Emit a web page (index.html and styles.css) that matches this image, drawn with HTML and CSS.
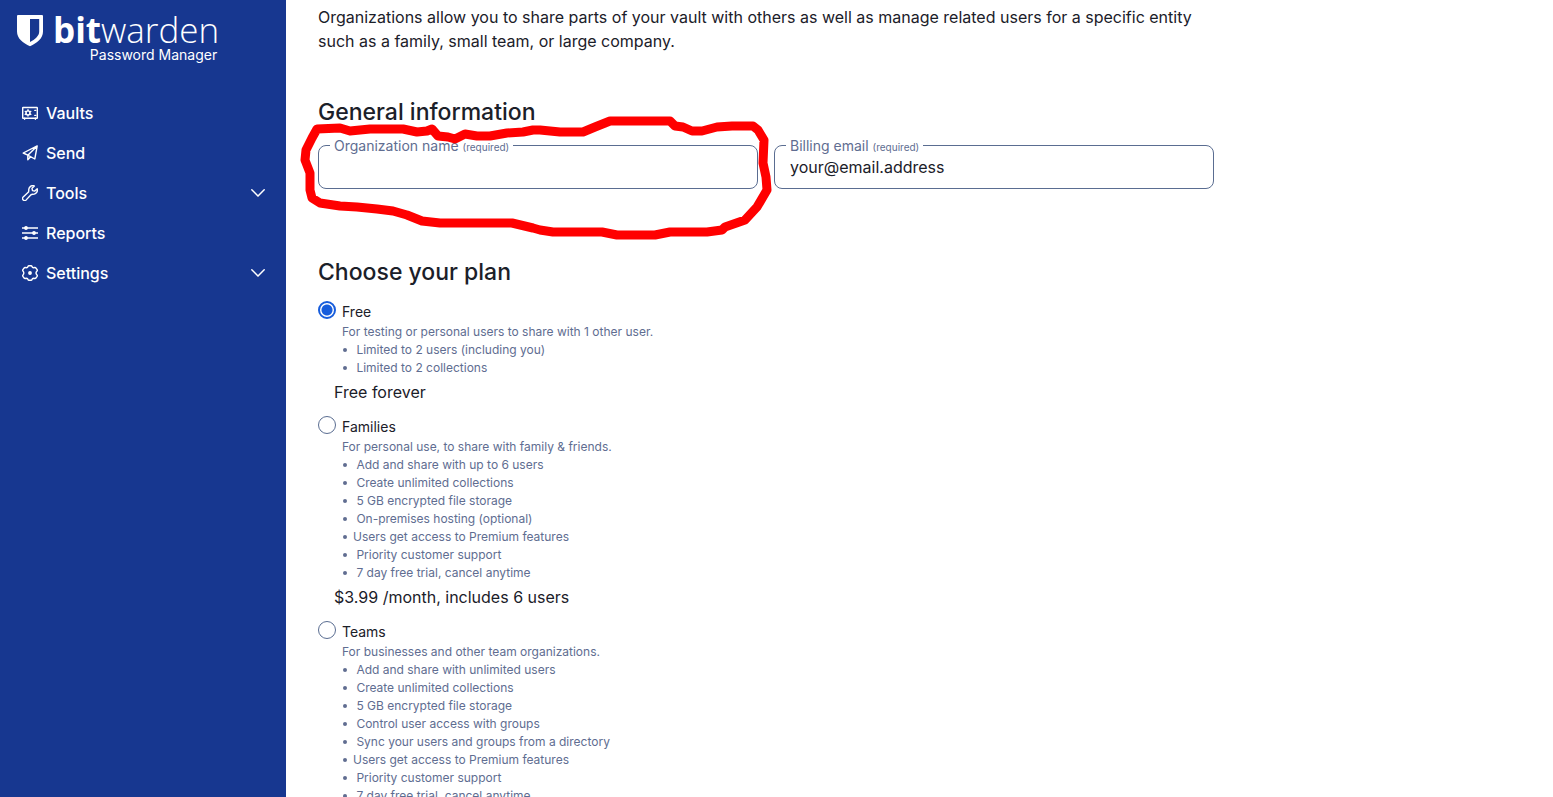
FILE: index.html
```html
<!DOCTYPE html>
<html lang="en">
<head>
    <meta charset="UTF-8">
    <meta name="viewport" content="width=device-width, initial-scale=1.0">
    <title>New organization | Bitwarden Web vault</title>
    <link rel="stylesheet" href="styles.css">
</head>
<body>
    <div class="layout">
        <aside class="sidebar">
            <a href="#" class="logo">
                <svg class="logo-shield" viewBox="0 0 26 32" aria-hidden="true">
                    <path fill="#fff" fill-rule="evenodd" d="M1 0h24a1 1 0 0 1 1 1v15.500c0 7-6 11.500-13 14.800C6 28 0 23.500 0 16.500V1a1 1 0 0 1 1-1zM13 4v23c5-2.600 9.200-6 9.200-10.500V4z"/>
                </svg>
                <span class="logo-text">
                    <span class="logo-name"><b>bit</b>warden</span>
                    <span class="logo-product">Password Manager</span>
                </span>
            </a>
            <nav class="nav">
                <a href="#" class="nav-item">
                    <svg class="nav-icon" viewBox="0 0 16 16">
                        <rect x="0.700" y="2.500" width="14.600" height="10.800" rx="0.400"/>
                        <circle cx="6" cy="7.900" r="2"/>
                        <path d="M6 4.800v1M6 10v1M3.200 6.400l.9.500M7.900 8.900l.9.500M3.200 9.400l.9-.5M7.900 6.900l.9-.5M12.800 5.400h1M12.800 10.400h1M2.600 13.300v1M13.400 13.300v1"/>
                    </svg>
                    <span>Vaults</span>
                </a>
                <a href="#" class="nav-item">
                    <svg class="nav-icon" viewBox="0 0 16 16">
                        <path d="M15.200.9L1.200 8l4.600 2.200 7 3.800zM15.200.9L5.800 10.200v4.600l2.800-3"/>
                    </svg>
                    <span>Send</span>
                </a>
                <button type="button" class="nav-item">
                    <svg class="nav-icon" viewBox="0 0 16 16">
                        <path d="M12.300.9C9.300-.1 6.300 2.200 6.800 5.600L6.500 7 1.200 11.900c-2 2.200 1 4.900 3 3L9 9.700l1.500-.4c3.200.4 5.600-2.600 4.700-5.500l-2.400 2.300-2.300-.5-.5-2.300z"/>
                    </svg>
                    <span>Tools</span>
                    <svg class="chevron" viewBox="0 0 14 8"><path d="M0.800 0.800L7 7l6.200-6.200"/></svg>
                </button>
                <a href="#" class="nav-item">
                    <svg class="nav-icon reports" viewBox="0 0 16 16">
                        <path d="M0 3h16M0 8h16M0 13h16"/>
                        <circle cx="4" cy="3" r="1.200"/>
                        <circle cx="12" cy="8" r="1.200"/>
                        <circle cx="4" cy="13" r="1.200"/>
                    </svg>
                    <span>Reports</span>
                </a>
                <button type="button" class="nav-item">
                    <svg class="nav-icon" viewBox="0 0 16 16">
                        <path d="M6 1.500Q6.200.7 7 .7h2q.8 0 1 .8.300 1.200 1.500 1.200l1.300-.2q.7-.1 1.100.5l1.200 1.600q.5.800-.1 1.400c-1.100 1.100-1.100 2.900 0 4q.6.600.1 1.400l-1.200 1.600q-.4.600-1.100.5l-1.300-.2q-1.200 0-1.500 1.200-.2.800-1 .8H7q-.8 0-1-.8-.3-1.200-1.500-1.200l-1.300.2q-.7.100-1.100-.5L.9 11.400q-.5-.8.100-1.400c1.100-1.100 1.100-2.900 0-4q-.6-.6-.1-1.400l1.200-1.600q.4-.6 1.100-.5l1.300.2q1.200 0 1.500-1.200z"/>
                        <circle class="hub" cx="8" cy="8" r="1.200"/>
                    </svg>
                    <span>Settings</span>
                    <svg class="chevron" viewBox="0 0 14 8"><path d="M0.800 0.800L7 7l6.200-6.200"/></svg>
                </button>
            </nav>
        </aside>

        <main class="content">
            <form class="org-form">
                <p class="intro">Organizations allow you to share parts of your vault with others as well as manage related users for a specific entity such as a family, small team, or large company.</p>

                <h2>General information</h2>
                <div class="fields">
                    <div class="field">
                        <label for="orgName">Organization name <small>(required)</small></label>
                        <input type="text" id="orgName" name="orgName">
                        <svg class="marker" viewBox="300 115 472 125" aria-hidden="true">
                            <path d="M317 129L340 128 350 131 370 129 403 129 417 132 427 131 432 129 438 136 448 137 455 139 465 134 477 136 490 136 507 133 523 132 533 130 540 130 560 132 583 132 595 127 610 121 670 121 675 126 683 127 692 131 702 131 717 127 732 126 753 126 758 130 764 140 763 163 766 177 767 190 757 207 745 220 725 227 722 230 707 232 670 232 655 235 617 235 602 232 553 232 540 230 533 228 512 223 440 223 422 221 407 215 393 211 377 209 357 207 340 206 320 203 312 198 310 190 310 173 305 160 306 150 312 138z"/>
                        </svg>
                    </div>
                    <div class="field">
                        <label for="billingEmail">Billing email <small>(required)</small></label>
                        <input type="email" id="billingEmail" name="billingEmail" value="your@email.address">
                    </div>
                </div>

                <h2>Choose your plan</h2>
                <div class="plan">
                    <div class="plan-option">
                        <input type="radio" id="planFree" name="plan" checked>
                        <div class="plan-body">
                            <label for="planFree">Free</label>
                            <p>For testing or personal users to share with 1 other user.</p>
                            <ul>
                                <li>&nbsp;Limited to 2 users (including you)</li>
                                <li>&nbsp;Limited to 2 collections</li>
                            </ul>
                        </div>
                    </div>
                    <div class="price">Free forever</div>
                </div>

                <div class="plan">
                    <div class="plan-option">
                        <input type="radio" id="planFamilies" name="plan">
                        <div class="plan-body">
                            <label for="planFamilies">Families</label>
                            <p>For personal use, to share with family &amp; friends.</p>
                            <ul>
                                <li>&nbsp;Add and share with up to 6 users</li>
                                <li>&nbsp;Create unlimited collections</li>
                                <li>&nbsp;5 GB encrypted file storage</li>
                                <li>&nbsp;On-premises hosting (optional)</li>
                                <li>Users get access to Premium features</li>
                                <li>&nbsp;Priority customer support</li>
                                <li>&nbsp;7 day free trial, cancel anytime</li>
                            </ul>
                        </div>
                    </div>
                    <div class="price">$3.99 /month, includes 6 users</div>
                </div>

                <div class="plan">
                    <div class="plan-option">
                        <input type="radio" id="planTeams" name="plan">
                        <div class="plan-body">
                            <label for="planTeams">Teams</label>
                            <p>For businesses and other team organizations.</p>
                            <ul>
                                <li>&nbsp;Add and share with unlimited users</li>
                                <li>&nbsp;Create unlimited collections</li>
                                <li>&nbsp;5 GB encrypted file storage</li>
                                <li>&nbsp;Control user access with groups</li>
                                <li>&nbsp;Sync your users and groups from a directory</li>
                                <li>Users get access to Premium features</li>
                                <li>&nbsp;Priority customer support</li>
                                <li>&nbsp;7 day free trial, cancel anytime</li>
                            </ul>
                        </div>
                    </div>
                </div>
            </form>
        </main>
    </div>
</body>
</html>
```
FILE: styles.css
```css
* {
    box-sizing: border-box;
}
body {
    margin: 0;
    font-family: Inter, "Liberation Sans", sans-serif;
    font-size: 16px;
    line-height: 24px;
    color: #1b2029;
    background: #fff;
}
.layout {
    display: flex;
    height: 100vh;
    overflow: hidden;
}

/* Sidebar */
.sidebar {
    flex: 0 0 286px;
    background: #173790;
    color: #fff;
}
.logo {
    display: flex;
    align-items: flex-start;
    gap: 9px;
    padding: 15px 16px 0;
    color: #fff;
    text-decoration: none;
}
.logo-shield {
    width: 28px;
    height: 32px;
}
.logo-text {
    display: flex;
    flex-direction: column;
    align-items: flex-end;
}
.logo-name {
    font-family: "Open Sans", sans-serif;
    font-size: 35px;
    font-weight: 300;
    line-height: 30px;
}
.logo-name b {
    font-weight: 700;
}
.logo-product {
    padding-right: 2px;
    font-size: 14px;
    line-height: 20px;
}
.nav {
    display: flex;
    flex-direction: column;
    padding-top: 28px;
}
.nav-item {
    display: flex;
    align-items: center;
    gap: 8px;
    height: 40px;
    padding: 0 21px 0 22px;
    border: none;
    background: none;
    color: #fff;
    font-family: inherit;
    font-size: 16px;
    font-weight: 500;
    text-decoration: none;
    cursor: pointer;
}
.nav-item:hover span {
    text-decoration: underline;
}
.nav-icon {
    width: 16px;
    height: 16px;
    fill: none;
    stroke: #fff;
    stroke-width: 1.4;
    stroke-linejoin: round;
    stroke-linecap: round;
}
.reports circle,
.hub {
    fill: #fff;
}
.chevron {
    width: 14px;
    height: 8px;
    margin-left: auto;
    fill: none;
    stroke: #fff;
    stroke-width: 1.5;
    stroke-linecap: round;
}

/* Main content */
.content {
    flex: 1;
    min-width: 0;
    padding: 5px 32px 0;
    overflow: hidden;
}
.org-form {
    max-width: 896px;
}
.intro {
    margin: 0 0 43px;
}
h2 {
    margin: 0 0 13px;
    font-size: 23px;
    font-weight: 500;
    line-height: 32px;
}
.fields {
    display: grid;
    grid-template-columns: 1fr 1fr;
    gap: 16px;
    padding-top: 4px;
    margin-bottom: 67px;
}
.field {
    position: relative;
}
.field label {
    position: absolute;
    top: -9px;
    left: 12px;
    padding: 0 4px;
    background: #fff;
    color: #606d91;
    font-size: 14px;
    line-height: 20px;
}
.field small {
    font-size: 10px;
}
.field input {
    display: block;
    width: 100%;
    height: 44px;
    padding: 0 15px;
    border: 1px solid #5a6d91;
    border-radius: 8px;
    background: #fff;
    color: #1b2029;
    font-family: inherit;
    font-size: 16px;
}
.field input:focus {
    border-color: #175ddc;
    outline: none;
}
.marker {
    position: absolute;
    top: -30px;
    left: -18px;
    width: 472px;
    height: 125px;
    fill: none;
    stroke: #f00;
    stroke-width: 9;
    stroke-linejoin: round;
    pointer-events: none;
}

/* Plans */
.plan {
    margin-bottom: 12px;
}
.plan-option {
    display: flex;
    align-items: flex-start;
    gap: 6px;
}
.plan-option input {
    appearance: none;
    flex: none;
    width: 18px;
    height: 18px;
    margin: 0;
    border: 1px solid #5a6d91;
    border-radius: 50%;
    background: #fff;
}
.plan-option input:checked {
    border: 2px solid #175ddc;
    background: radial-gradient(circle, #175ddc 5px, #fff 6px);
}
.plan-body {
    color: #606d91;
    font-size: 12px;
    line-height: 18px;
}
.plan-body label {
    display: block;
    color: #1b2029;
    font-size: 14px;
    line-height: 22px;
}
.plan-body p {
    margin: 0;
}
.plan-body ul {
    margin: 0;
    padding: 0;
    list-style: none;
}
.plan-body li {
    display: flex;
    align-items: center;
}
.plan-body li::before {
    content: "";
    width: 4px;
    height: 4px;
    margin: 0 6px 0 1px;
    border-radius: 50%;
    background: #606d91;
}
.price {
    padding: 3px 16px 0;
}
```
